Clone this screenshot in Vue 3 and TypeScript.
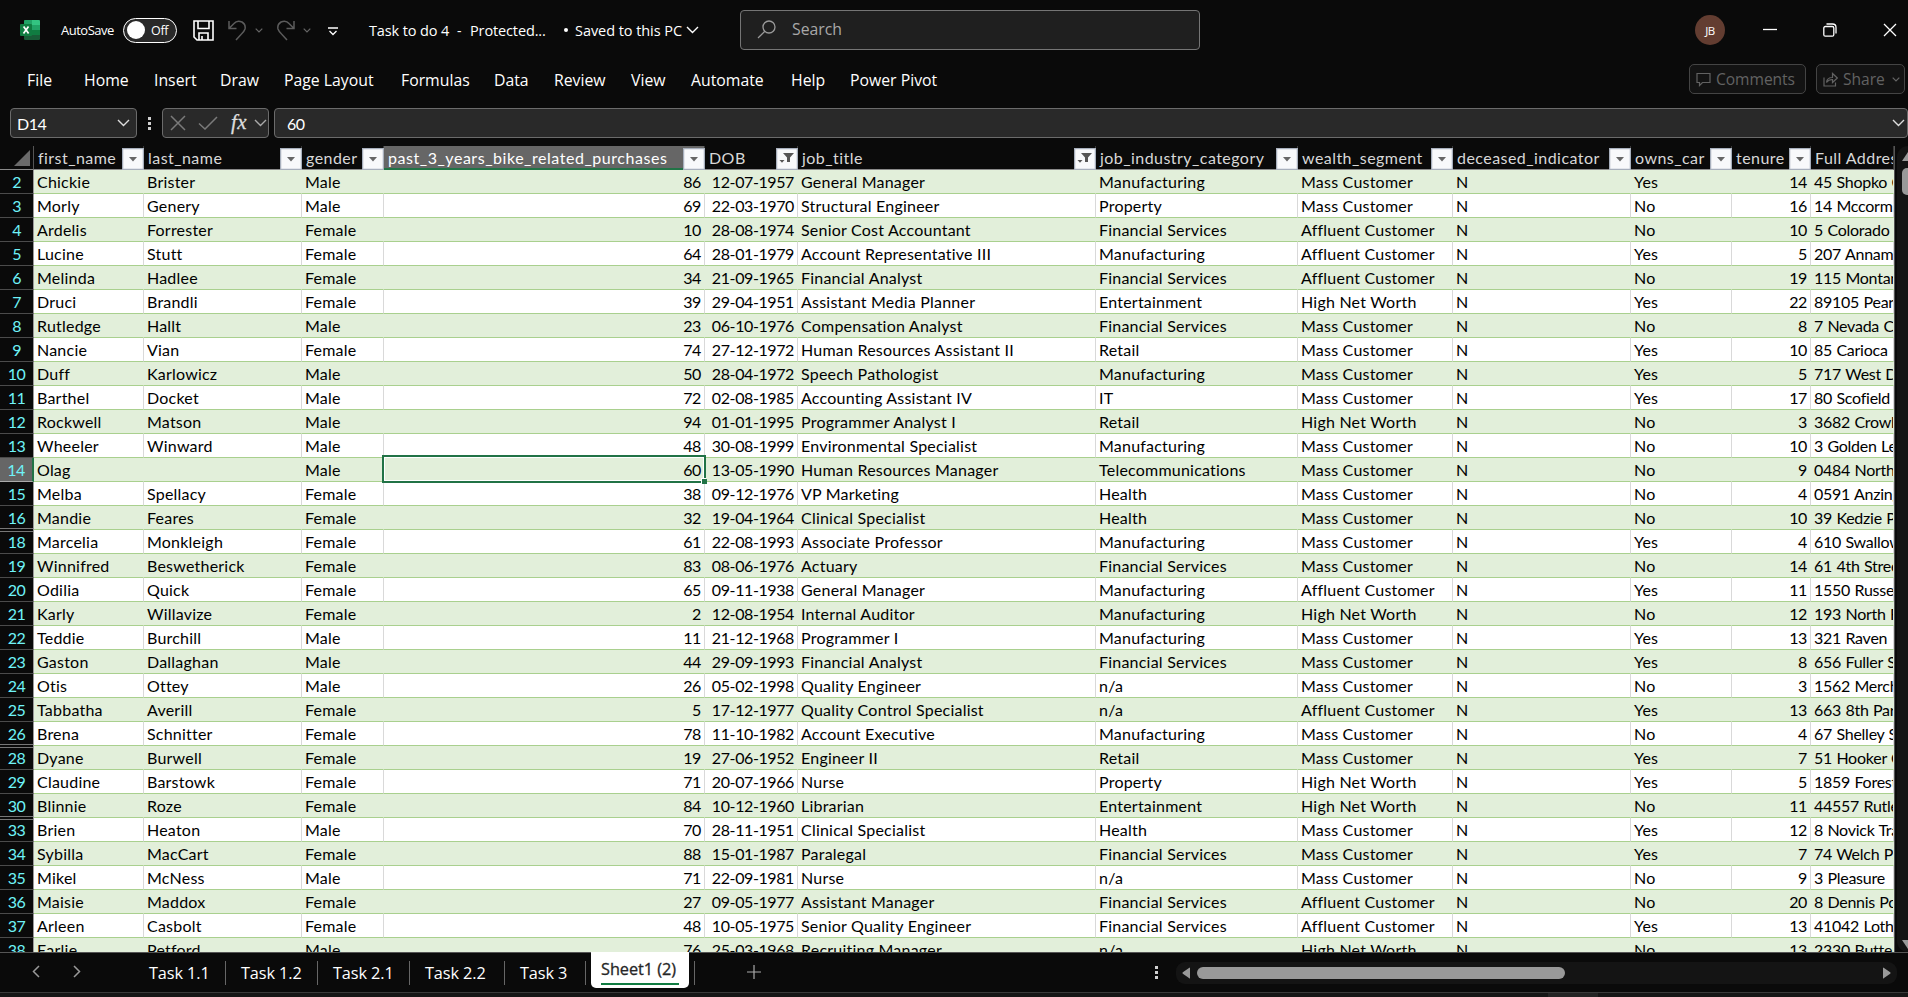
<script setup lang="ts">
interface Column { key: string; width: number; filter?: 'menu' | 'active'; right?: boolean; address?: boolean }

const columns: Column[] = [
  { key: 'first_name', width: 110, filter: 'menu' },
  { key: 'last_name', width: 158, filter: 'menu' },
  { key: 'gender', width: 82, filter: 'menu' },
  { key: 'past_3_years_bike_related_purchases', width: 321, filter: 'menu', right: true },
  { key: 'DOB', width: 93, filter: 'active', right: true },
  { key: 'job_title', width: 298, filter: 'active' },
  { key: 'job_industry_category', width: 202, filter: 'menu' },
  { key: 'wealth_segment', width: 155, filter: 'menu' },
  { key: 'deceased_indicator', width: 178, filter: 'menu' },
  { key: 'owns_car', width: 101, filter: 'menu' },
  { key: 'tenure', width: 79, filter: 'menu', right: true },
  { key: 'Full Address', width: 83, address: true },
]

const source = `2|Chickie|Brister|Male|86|12-07-1957|General Manager|Manufacturing|Mass Customer|N|Yes|14|45 Shopko Center
3|Morly|Genery|Male|69|22-03-1970|Structural Engineer|Property|Mass Customer|N|No|16|14 Mccormick
4|Ardelis|Forrester|Female|10|28-08-1974|Senior Cost Accountant|Financial Services|Affluent Customer|N|No|10|5 Colorado Crossing
5|Lucine|Stutt|Female|64|28-01-1979|Account Representative III|Manufacturing|Affluent Customer|N|Yes|5|207 Annamark
6|Melinda|Hadlee|Female|34|21-09-1965|Financial Analyst|Financial Services|Affluent Customer|N|No|19|115 Montana
7|Druci|Brandli|Female|39|29-04-1951|Assistant Media Planner|Entertainment|High Net Worth|N|Yes|22|89105 Pearson
8|Rutledge|Hallt|Male|23|06-10-1976|Compensation Analyst|Financial Services|Mass Customer|N|No|8|7 Nevada Crossing
9|Nancie|Vian|Female|74|27-12-1972|Human Resources Assistant II|Retail|Mass Customer|N|Yes|10|85 Carioca
10|Duff|Karlowicz|Male|50|28-04-1972|Speech Pathologist|Manufacturing|Mass Customer|N|Yes|5|717 West Drive
11|Barthel|Docket|Male|72|02-08-1985|Accounting Assistant IV|IT|Mass Customer|N|Yes|17|80 Scofield
12|Rockwell|Matson|Male|94|01-01-1995|Programmer Analyst I|Retail|High Net Worth|N|No|3|3682 Crowley
13|Wheeler|Winward|Male|48|30-08-1999|Environmental Specialist|Manufacturing|Mass Customer|N|No|10|3 Golden Leaf
14|Olag||Male|60|13-05-1990|Human Resources Manager|Telecommunications|Mass Customer|N|No|9|0484 North
15|Melba|Spellacy|Female|38|09-12-1976|VP Marketing|Health|Mass Customer|N|No|4|0591 Anzinger
16|Mandie|Feares|Female|32|19-04-1964|Clinical Specialist|Health|Mass Customer|N|No|10|39 Kedzie Pass
18|Marcelia|Monkleigh|Female|61|22-08-1993|Associate Professor|Manufacturing|Mass Customer|N|Yes|4|610 Swallow
19|Winnifred|Beswetherick|Female|83|08-06-1976|Actuary|Financial Services|Mass Customer|N|No|14|61 4th Street
20|Odilia|Quick|Female|65|09-11-1938|General Manager|Manufacturing|Affluent Customer|N|Yes|11|1550 Russell
21|Karly|Willavize|Female|2|12-08-1954|Internal Auditor|Manufacturing|High Net Worth|N|No|12|193 North Road
22|Teddie|Burchill|Male|11|21-12-1968|Programmer I|Manufacturing|Mass Customer|N|Yes|13|321 Raven
23|Gaston|Dallaghan|Male|44|29-09-1993|Financial Analyst|Financial Services|Mass Customer|N|Yes|8|656 Fuller Street
24|Otis|Ottey|Male|26|05-02-1998|Quality Engineer|n/a|Mass Customer|N|No|3|1562 Merchant
25|Tabbatha|Averill|Female|5|17-12-1977|Quality Control Specialist|n/a|Affluent Customer|N|Yes|13|663 8th Parkway
26|Brena|Schnitter|Female|78|11-10-1982|Account Executive|Manufacturing|Mass Customer|N|No|4|67 Shelley Street
28|Dyane|Burwell|Female|19|27-06-1952|Engineer II|Retail|Mass Customer|N|Yes|7|51 Hooker Court
29|Claudine|Barstowk|Female|71|20-07-1966|Nurse|Property|High Net Worth|N|Yes|5|1859 Forest
30|Blinnie|Roze|Female|84|10-12-1960|Librarian|Entertainment|High Net Worth|N|No|11|44557 Rutledge
33|Brien|Heaton|Male|70|28-11-1951|Clinical Specialist|Health|Mass Customer|N|Yes|12|8 Novick Trail
34|Sybilla|MacCart|Female|88|15-01-1987|Paralegal|Financial Services|Mass Customer|N|Yes|7|74 Welch Park
35|Mikel|McNess|Male|71|22-09-1981|Nurse|n/a|Mass Customer|N|No|9|3 Pleasure
36|Maisie|Maddox|Female|27|09-05-1977|Assistant Manager|Financial Services|Affluent Customer|N|No|20|8 Dennis Point
37|Arleen|Casbolt|Female|48|10-05-1975|Senior Quality Engineer|Financial Services|Affluent Customer|N|Yes|13|41042 Lothair
38|Earlie|Petford|Male|76|25-03-1968|Recruiting Manager|n/a|High Net Worth|N|No|13|2330 Butterfield`

const rows = source.split('\n').map((line) => {
  const [num, ...cells] = line.split('|')
  return { num: Number(num), cells }
})
const gapAfter = (i: number) => i + 1 < rows.length && rows[i + 1].num - rows[i].num > 1
const gapBefore = (i: number) => i > 0 && rows[i].num - rows[i - 1].num > 1

const menu = ['File', 'Home', 'Insert', 'Draw', 'Page Layout', 'Formulas', 'Data', 'Review', 'View', 'Automate', 'Help', 'Power Pivot']
const sheets = ['Task 1.1', 'Task 1.2', 'Task 2.1', 'Task 2.2', 'Task 3']
</script>

<template>
  <div class="excel">
    <header class="title">
      <svg class="logo" viewBox="0 0 20 20">
        <rect x="4" width="16" height="20" rx="1.2" fill="#185c37" />
        <path d="M4 1.2Q4 0 5.200 0H12V5H4z" fill="#21a366" />
        <path d="M12 0h6.800Q20 0 20 1.200V5h-8z" fill="#33c481" />
        <path d="M4 5h8v5H4z" fill="#107c41" /><path d="M12 5h8v5h-8z" fill="#21a366" />
        <path d="M12 10h8v5h-8z" fill="#107c41" />
        <rect y="4" width="12" height="12" rx="1" fill="#107c41" />
        <path d="M3.600 6.500 8.600 13.500M8.500 6.500 3.500 13.500" stroke="#fff" stroke-width="1.700" />
      </svg>
      <span class="autosave">AutoSave</span>
      <span class="toggle"><i class="knob"></i>Off</span>
      <svg class="save" viewBox="0 0 21 21"><path d="M1 1h19v19H4l-3-3zM5 1v7.500h11V1M6 20v-7h9v7M9 20v-4" /></svg>
      <svg class="undo" viewBox="0 0 19 21"><path d="M1 1v7.500h7.500M1.500 8 6 3.500Q9-.2 14 2q4 2.500 3 7-1 3-4 5.500L8 20" /></svg>
      <svg class="mini dim" viewBox="0 0 8 5"><path d="m.7.700 3.300 3.300L7.300.700" /></svg>
      <svg class="undo redo" viewBox="0 0 19 21"><path d="M18 1v7.500h-7.500M17.500 8 13 3.500Q10-.2 5 2 1 4.500 2 9q1 3 4 5.500L11 20" /></svg>
      <svg class="mini dim" viewBox="0 0 8 5"><path d="m.7.700 3.300 3.300L7.300.700" /></svg>
      <svg class="qat" viewBox="0 0 10 9"><path d="M0 1h10M1.500 4 5 7.500 8.500 4" /></svg>
      <span class="doc">Task to do 4</span><span class="dash">-</span><span class="prot">Protected...</span>
      <i class="bullet"></i><span class="saved">Saved to this PC</span>
      <svg class="chev" viewBox="0 0 13 8"><path d="m1 1 5.500 5.500L12 1" /></svg>
      <div class="search">
        <svg viewBox="0 0 19 19"><circle cx="12" cy="7" r="6" /><path d="M7.800 11.300 1 18" /></svg>
        <span>Search</span>
      </div>
      <span class="avatar">JB</span>
      <svg class="win min" viewBox="0 0 14 14"><path d="M0 6.500h14" /></svg>
      <svg class="win restore" viewBox="0 0 14 14"><rect x=".8" y="3.500" width="10" height="9.700" rx="1.500" /><path d="M3.500 1h6Q13 1 13 4.500v6" /></svg>
      <svg class="win close" viewBox="0 0 14 14"><path d="m1 1 12 12M13 1 1 13" /></svg>
    </header>

    <nav class="menu">
      <span v-for="m in menu" :key="m">{{ m }}</span>
      <div class="btn comments">
        <svg viewBox="0 0 15 15"><path d="M1 1.500h13v9H6.500L3.500 13.500v-3H1z" /></svg>Comments
      </div>
      <div class="btn share">
        <svg viewBox="0 0 15 15"><path d="M1 5.500V14h11.500v-3.500M3.500 10.500Q4 5.500 9.500 5.500v-4l4.800 4.500-4.800 4.500v-3Q5.500 7.500 3.500 10.500z" /></svg>Share
        <svg class="mini" viewBox="0 0 8 5"><path d="m.7.700 3.300 3.300L7.300.700" /></svg>
      </div>
    </nav>

    <section class="formula">
      <div class="box name"><span>D14</span><svg class="chev" viewBox="0 0 13 8"><path d="m1 1 5.500 5.500L12 1" /></svg></div>
      <span class="dots"><i></i><i></i><i></i></span>
      <div class="box tools">
        <svg class="x" viewBox="0 0 16 16"><path d="m1 1 14 14M15 1 1 15" /></svg>
        <svg class="check" viewBox="0 0 20 14"><path d="m1 7.500 6 5.500L19 1" /></svg>
        <span class="fx">fx</span>
        <svg class="chev" viewBox="0 0 13 8"><path d="m1 1 5.500 5.500L12 1" /></svg>
      </div>
      <div class="box value"><span>60</span><svg class="chev" viewBox="0 0 13 8"><path d="m1 1 5.500 5.500L12 1" /></svg></div>
    </section>

    <main class="body">
      <div class="grid">
        <div class="row head">
          <div class="num corner"><svg viewBox="0 0 16 16"><path d="M16 0v16H0z" fill="#6a6a6a" /></svg></div>
          <div v-for="(c, i) in columns" :key="c.key" class="hcell" :class="{ picked: i === 3, clip: c.address }" :style="{ width: c.width + 'px' }">
            <span>{{ c.key }}</span>
            <svg v-if="c.filter" class="filter" viewBox="0 0 22 22">
              <rect x=".5" y=".5" width="21" height="21" fill="#f8f9fb" stroke="#a7afbc" />
              <path v-if="c.filter === 'menu'" d="M7 9h8l-4 4.500z" fill="#666" />
              <path v-else d="M7 5h11l-4 4.500V14h-3V9.500zM3.500 12h5L6 14.800z" fill="#555" />
            </svg>
          </div>
        </div>
        <div v-for="(r, i) in rows" :key="r.num" class="row" :class="{ band: i % 2 === 0, current: r.num === 14 }">
          <div class="num" :class="{ 'gap-after': gapAfter(i), 'gap-before': gapBefore(i) }">{{ r.num }}</div>
          <div v-for="(c, j) in columns" :key="c.key" class="cell" :class="{ right: c.right, address: c.address, sel: r.num === 14 && j === 3 }" :style="{ width: c.width + 'px' }">{{ r.cells[j] }}</div>
        </div>
      </div>
      <div class="vscroll"><i class="up"></i><i class="vthumb"></i><i class="down"></i></div>
    </main>

    <footer class="tabs">
      <svg class="arrow" viewBox="0 0 8 13"><path d="M7 1 1.500 6.500 7 12" /></svg>
      <svg class="arrow next" viewBox="0 0 8 13"><path d="m1 1 5.500 5.500L1 12" /></svg>
      <div class="sheets"><span v-for="s in sheets" :key="s">{{ s }}</span></div>
      <div class="active"><span>Sheet1 (2)</span></div>
      <i class="sep"></i>
      <svg class="plus" viewBox="0 0 14 14"><path d="M7 0v14M0 7h14" /></svg>
      <span class="dots"><i></i><i></i><i></i></span>
      <div class="hscroll">
        <svg viewBox="0 0 9 12"><path d="M8 1v10Q8 12 7 11L.8 6.800Q0 6 .8 5.200L7 1Q8 0 8 1z" /></svg>
        <i class="hthumb"></i>
        <svg class="fwd" viewBox="0 0 9 12"><path d="M1 1v10Q1 12 2 11l6.200-4.200Q9 6 8.200 5.200L2 1Q1 0 1 1z" /></svg>
      </div>
    </footer>
    <div class="status"><i></i></div>
  </div>
</template>

<style>
body { background: #0a0a0a; overflow: hidden; }
</style>

<style scoped>
* { box-sizing: border-box; }
.excel { width: 1908px; height: 997px; overflow: hidden; display: flex; flex-direction: column; background: #0a0a0a; color: #fff; font: 14px "Open Sans", "Noto Sans", sans-serif; white-space: nowrap; }
svg { display: block; flex: none; fill: none; stroke: #fff; stroke-width: 1.5; }
i, span { flex: none; }
.logo, .filter, .corner svg { stroke: none; }

.title { height: 60px; display: flex; align-items: center; padding-left: 20px; flex: none; }
.logo { width: 20px; height: 20px; }
.autosave { width: 62px; margin-left: 21px; font-size: 13px; letter-spacing: -.5px; }
.toggle { width: 54px; height: 25px; border: 1.500px solid #fff; border-radius: 13px; background: #292929; display: flex; align-items: center; font-size: 12.500px; letter-spacing: -.3px; }
.knob { width: 18px; height: 18px; border-radius: 50%; background: #fff; margin: 0 6px 0 3px; }
.save { width: 21px; height: 21px; margin-left: 16px; stroke-width: 1.600; }
.undo { width: 19px; height: 21px; margin-left: 14px; stroke: #5c5c5c; }
.redo { margin-left: 13px; }
.mini { width: 8px; height: 5px; stroke: #666; stroke-width: 1.200; }
.title .mini { margin-left: 8px; }
.qat { width: 10px; height: 9px; margin: 3px 0 0 17px; stroke-width: 1.300; }
.doc { margin-left: 31px; width: 88px; }
.doc, .prot, .saved { font-size: 14.500px; letter-spacing: -.13px; }
.dash { width: 13px; }
.prot { width: 94px; }
.bullet { width: 4px; height: 4px; border-radius: 50%; background: #fff; }
.saved { margin-left: 7px; width: 111px; letter-spacing: -.06px; }
.chev { width: 13px; height: 8px; stroke-width: 1.400; }
.search { width: 460px; height: 40px; margin-left: 41px; margin-bottom: 1px; border: 1px solid #757575; border-radius: 4px; background: #1f1f1f; display: flex; align-items: center; color: #a8a8a8; font-size: 15.800px; letter-spacing: 0; flex: none; }
.search svg { width: 19px; height: 19px; margin: 0 16px; stroke: #9a9a9a; stroke-width: 1.300; }
.search span { padding-bottom: 2px; }
.avatar { width: 30px; height: 30px; margin-left: 495px; border-radius: 50%; background: #633d31; font-size: 11.500px; letter-spacing: -.5px; display: flex; align-items: center; justify-content: center; }
.win { width: 14px; height: 14px; margin-left: 46px; stroke-width: 1.300; }
.min { margin-left: 38px; }

.menu { height: 40px; padding: 0 3px 2px 27px; display: grid; grid-template-columns: 57px 70px 66px 64px 117px 93px 60px 77px 60px 100px 59px 1fr 117px 89px; align-items: center; flex: none; font-size: 15.800px; letter-spacing: 0; }
.menu > span { padding-top: 2px; }
.btn { height: 30px; border: 1px solid #444; border-radius: 5px; background: #131313; color: #626262; display: flex; align-items: center; font-size: 15.600px; letter-spacing: -.05px; padding-left: 6px; }
.btn svg:first-child { width: 15px; height: 15px; margin-right: 5px; stroke: #626262; stroke-width: 1.200; }
.share { margin-left: 0; width: 89px; }
.comments { margin-right: 10px; width: 117px; justify-self: end; }
.btn .mini { margin-left: 7px; }

.formula { height: 46px; padding: 8px 0 8px 10px; display: flex; flex: none; font-family: Lato, "Open Sans", sans-serif; font-size: 16px; }
.box { height: 30px; border: 1px solid #6b6b6b; border-radius: 4px; background: #292929; display: flex; align-items: center; flex: none; }
.box .chev { stroke: #ddd; }
.name { width: 127px; padding: 0 6px 0 6px; justify-content: space-between; letter-spacing: -.5px; }
.dots { width: 3px; height: 13px; display: flex; flex-direction: column; justify-content: space-between; }
.dots i { width: 3px; height: 3px; background: #d0d0d0; }
.formula .dots { margin: 9px 11px 0 11px; }
.tools { width: 107px; padding-left: 7px; }
.x { width: 16px; height: 16px; }
.check { width: 20px; height: 14px; margin-left: 12px; }
.x, .check { stroke: #7a7a7a; }
.fx { font: italic 21px "Liberation Serif", serif; color: #ddd; width: 19px; margin: -2px 0 0 13px; letter-spacing: .5px; -webkit-text-stroke: .3px #ddd; }
.tools .chev { margin-left: 4px; stroke: #aaa; }
.value { width: 1634px; margin-left: 5px; padding: 0 2px 0 12px; justify-content: space-between; letter-spacing: -.6px; }

.body { height: 807px; display: flex; flex: none; border-bottom: 1px solid #555; }
.grid { width: 1895px; overflow: hidden; flex: none; border-right: 1px solid #555; font-family: Lato, "Open Sans", sans-serif; font-size: 16px; letter-spacing: .22px; }
.row { display: flex; height: 24px; background: #fff; color: #000; }
.band { background: #e2efda; }
.num { width: 34px; flex: none; position: relative; background: #0a0a0a; color: #6ff3f8; border-right: 1px solid #9a9a9a; border-bottom: 1px solid #4b4b4b; text-align: center; line-height: 24px; letter-spacing: -.65px; }
.gap-after { border-bottom: 0; }
.gap-after::after { content: ""; position: absolute; inset: auto 0 1px 0; height: 1px; background: #777; }
.gap-before::before { content: ""; position: absolute; inset: 1px 0 auto 0; height: 1px; background: #777; }
.current .num { background: #666; border-right: 2px solid #217346; border-bottom-color: #aaa; }
.cell { flex: none; border-bottom: 1px solid #a9d08e; border-right: 1px solid #d9d9d9; padding: 0 2px 0 3px; line-height: 24px; overflow: hidden; }
.band .cell { border-right-color: transparent; }
.right { text-align: right; letter-spacing: -.4px; padding-right: 3px; }
.address { letter-spacing: -.25px; word-spacing: .5px; padding-right: 0; }
.cell.sel { position: relative; overflow: visible; }
.sel::before { content: ""; position: absolute; inset: -3px -2px -2px -2px; border: 2px solid #217346; box-shadow: inset 0 0 0 1px #fff; }
.sel::after { content: ""; position: absolute; right: -3px; bottom: -3px; width: 5px; height: 5px; background: #217346; box-shadow: -1px -1px 0 #fff; }
.head { background: #0a0a0a; color: #d8d8d8; }
.hcell { flex: none; display: flex; justify-content: space-between; border-right: 1px solid #383838; border-bottom: 1px solid #8a8a8a; padding-left: 4px; line-height: 24px; letter-spacing: .45px; }
.hcell > span { height: 23px; line-height: 23px; }
.clip { overflow: hidden; }
.picked { background: #666; color: #fff; border-bottom: 2px solid #217346; letter-spacing: .54px; }
.filter { width: 22px; height: 22px; margin: 2px -1px 0 0; position: relative; }
.corner { border-bottom-color: #8a8a8a; border-right-color: #555; }
.corner svg { width: 16px; height: 16px; margin: 4px 0 0 14px; }

.vscroll { width: 24px; margin-left: 2px; flex: none; background: #141414; border-radius: 11px; padding-left: 5px; display: flex; flex-direction: column; align-items: flex-start; }
.vscroll i { width: 12px; }
.up { height: 9px; margin-top: 6px; background: #999; clip-path: polygon(50% 0, 100% 100%, 0 100%); }
.vthumb { height: 27px; margin-top: 7px; border-radius: 5px; background: #999; }
.down { height: 9px; margin-top: auto; margin-bottom: 3px; background: #999; clip-path: polygon(0 0, 100% 0, 50% 100%); }

.tabs { height: 40px; display: flex; align-items: center; padding-left: 32px; flex: none; border-bottom: 1px solid #3a3a3a; }
.arrow { width: 8px; height: 13px; stroke: #999; margin-bottom: 2px; }
.next { margin-left: 33px; }
.sheets { display: grid; grid-template-columns: 95px 92px 92px 95px 81px; margin-left: 50px; align-items: center; font-size: 16.300px; letter-spacing: -.1px; }
.sheets span { height: 24px; line-height: 25px; border-right: 1px solid #666; padding-left: 15px; }
.sheets span:first-child { padding-left: 18px; }
.active { width: 98px; height: 36px; align-self: flex-start; margin-left: 5px; margin-top: -1px; padding: 3px 10px; background: #fff; color: #262626; border-radius: 0 0 5px 5px; font-size: 16.300px; letter-spacing: -.05px; }
.active span { display: block; height: 30px; line-height: 29px; border-bottom: 2px solid #107c41; -webkit-text-stroke: .3px #262626; }
.sep { width: 1px; height: 24px; margin-left: 5px; background: #666; }
.plus { width: 14px; height: 14px; margin: 0 0 2px 52px; stroke: #aaa; stroke-width: 1.200; }
.tabs .dots { margin-left: 394px; }
.hscroll { width: 721px; height: 22px; margin-left: 18px; border-radius: 9px; background: #141414; display: flex; align-items: center; padding: 0 6px; flex: none; }
.hscroll svg { width: 9px; height: 12px; fill: #999; stroke: none; }
.hthumb { width: 368px; height: 12px; margin-left: 6px; border-radius: 6px; background: #999; }
.fwd { margin-left: auto; }
.status { flex: 1; background: #161616; }
.status i { display: block; width: 50px; height: 4px; margin-left: 1548px; background: #242424; }
</style>
